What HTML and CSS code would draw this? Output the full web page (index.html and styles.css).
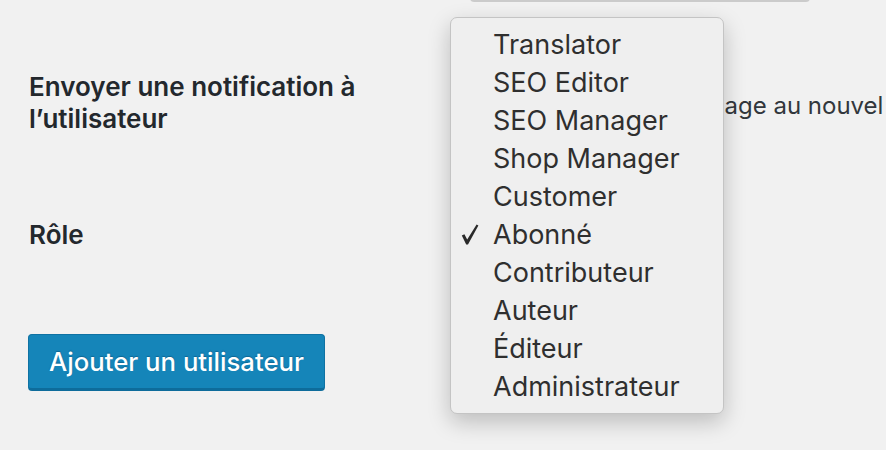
FILE: index.html
```html
<!DOCTYPE html>
<html lang="fr">
<head>
<meta charset="utf-8">
<title>Ajouter un utilisateur</title>
<link rel="stylesheet" href="styles.css">
</head>
<body>
<div class="page">
  <form class="form">
    <div class="row row-input">
      <div class="label"></div>
      <div class="field"><div class="text-input"></div></div>
    </div>
    <div class="row row-notify">
      <div class="label">Envoyer une notification à l’utilisateur</div>
      <div class="field"><label class="check"><span class="box"></span>Envoyer un message au nouvel utilisateur</label></div>
    </div>
    <div class="row row-role">
      <div class="label">Rôle</div>
      <div class="field"><div class="select">Abonné</div></div>
    </div>
    <div class="submit-row">
      <button type="button" class="button-primary">Ajouter un utilisateur</button>
    </div>
  </form>

  <ul class="menu">
    <li>Translator</li>
    <li>SEO Editor</li>
    <li>SEO Manager</li>
    <li>Shop Manager</li>
    <li>Customer</li>
    <li class="checked"><svg class="tick" width="18" height="21" viewBox="0 0 18 21"><path d="M0.8 11.6 L3.4 10.2 L6.2 15.6 L15.6 0.6 L17.4 1.4 L7 20.4 L5.2 20.4 Z" fill="#2a2a2a"/></svg>Abonné</li>
    <li>Contributeur</li>
    <li>Auteur</li>
    <li>Éditeur</li>
    <li>Administrateur</li>
  </ul>
</div>
</body>
</html>
```

FILE: styles.css
```css
html, body {
  margin: 0;
  padding: 0;
  background: #f1f1f1;
}
body {
  font-family: Inter, "Liberation Sans", Arial, sans-serif;
  color: #23282d;
  width: 886px;
  height: 450px;
  overflow: hidden;
}
.page {
  position: relative;
  display: flow-root;
  width: 886px;
  height: 450px;
  overflow: hidden;
}
.form {
  margin: -38px 0 0 0;
  padding: 0 0 0 29px;
}
.row {
  display: grid;
  grid-template-columns: 441px 1fr;
  align-items: start;
}
.label {
  font-size: 26px;
  font-weight: 600;
  line-height: 32px;
  width: 345px;
}
.text-input {
  width: 340px;
  height: 40px;
  box-sizing: border-box;
  border: 1px solid #d6d6d6;
  border-bottom: 2px solid #cbcbcb;
  border-radius: 4px;
  background: #f6f6f6;
}
.row-notify {
  margin-top: 69px;
}
.check {
  display: flex;
  align-items: center;
  gap: 39px;
  font-size: 24px;
  line-height: 32px;
  margin-top: 19px;
  white-space: nowrap;
  color: #32373c;
}
.box {
  width: 20px;
  height: 20px;
  border: 1px solid #b4b9be;
  background: #fff;
  flex: none;
}
.row-role {
  margin-top: 84px;
}
.select {
  font-size: 24px;
  line-height: 32px;
}
.submit-row {
  margin-top: 83px;
}
.button-primary {
  font-family: Inter, "Liberation Sans", Arial, sans-serif;
  margin-left: -1px;
  width: 297px;
  height: 57px;
  background: #1585b9;
  border: 1px solid #0f72a3;
  border-bottom: 3px solid #0e6c9b;
  border-radius: 4px;
  color: #fff;
  font-size: 25.7px;
  font-weight: 500;
  padding: 0;
  text-shadow: 0 -1px 1px #0d6694;
}
.menu {
  position: absolute;
  left: 450px;
  top: 17px;
  width: 274px;
  height: 397px;
  box-sizing: border-box;
  margin: 0;
  padding: 8px 0 0 0;
  list-style: none;
  background: #efefef;
  border: 1px solid #c4c4c4;
  border-radius: 7px;
  box-shadow: 0 8px 22px rgba(0, 0, 0, 0.22);
}
.menu li {
  position: relative;
  height: 38px;
  line-height: 38px;
  padding-left: 42px;
  font-size: 27px;
  color: #2f2f2f;
}
.tick {
  position: absolute;
  left: 10px;
  top: 8px;
}
```
